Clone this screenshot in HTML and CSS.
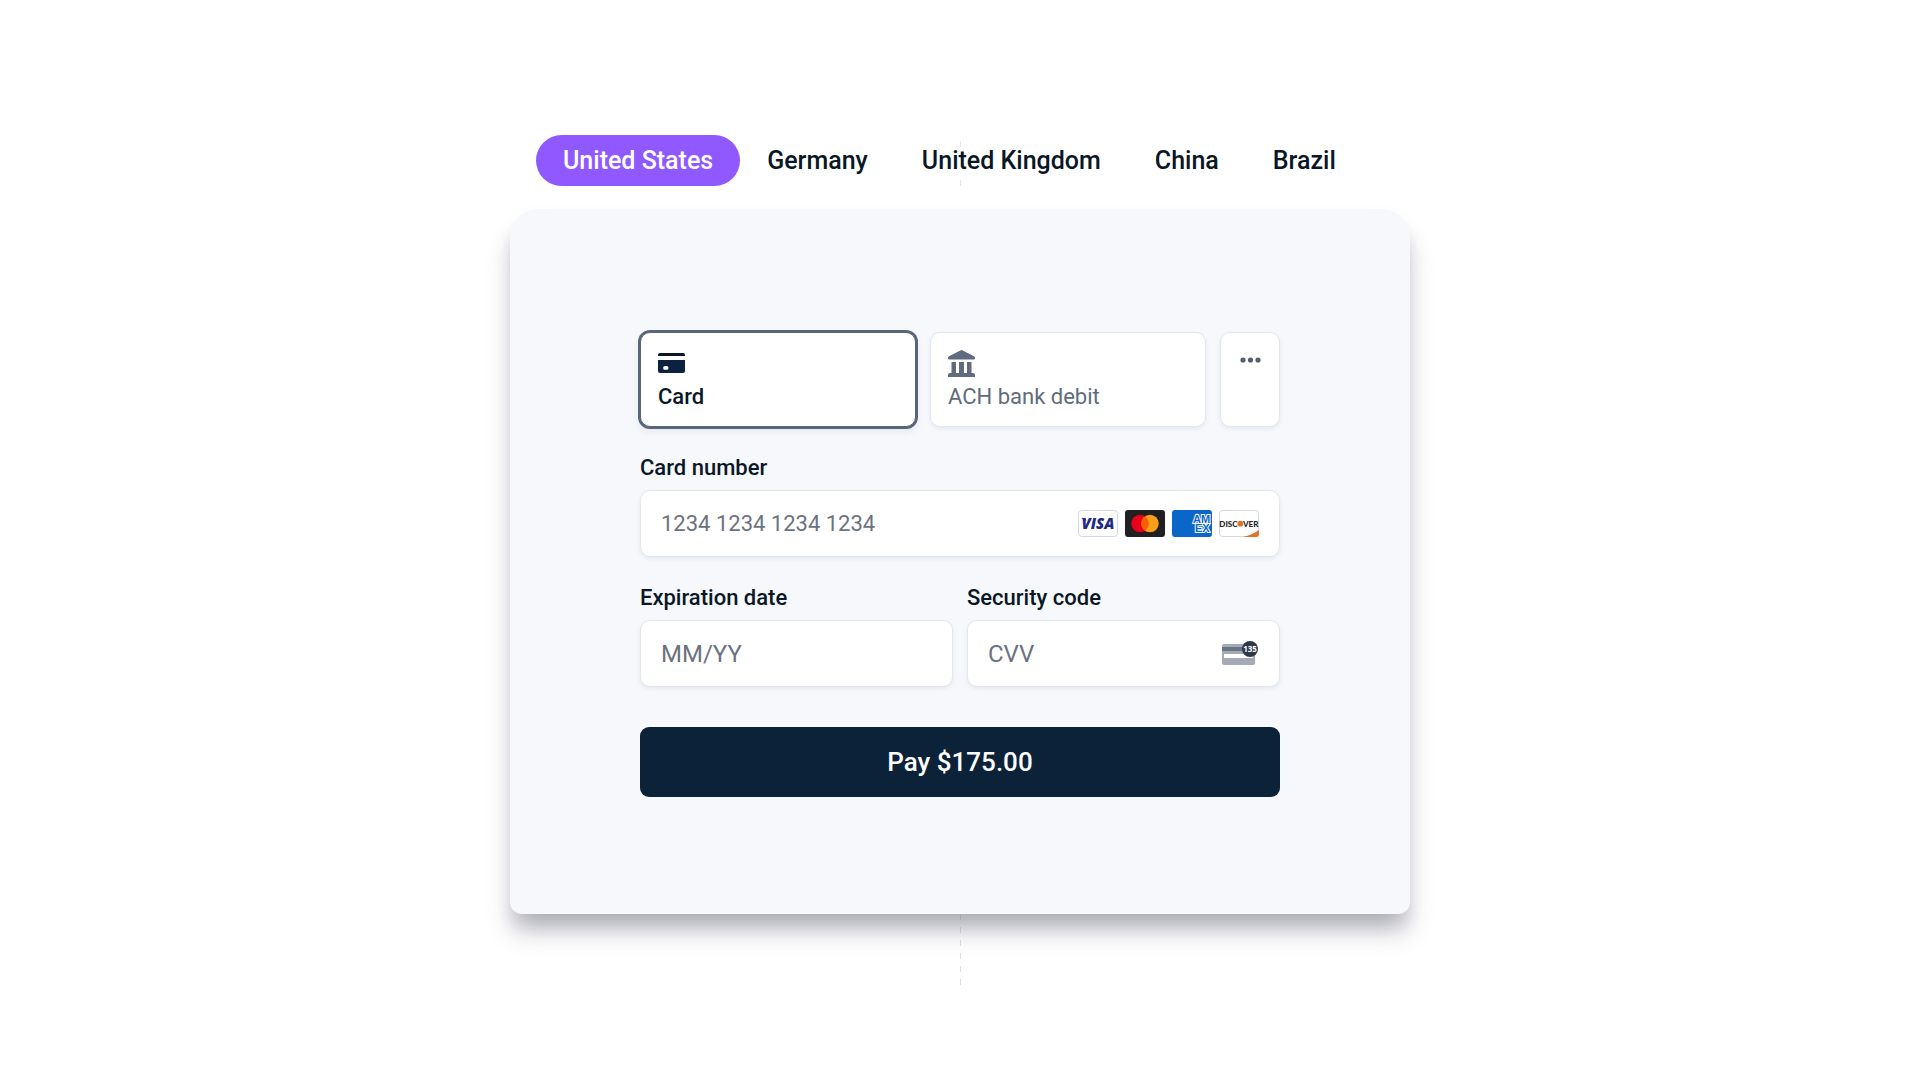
FILE: index.html
```html
<!DOCTYPE html>
<html lang="en">
<head>
  <meta charset="UTF-8">
  <meta name="viewport" content="width=device-width, initial-scale=1.0">
  <title>Payment Element</title>
  <link rel="stylesheet" href="styles.css">
</head>
<body>
  <main class="demo">
    <!-- Country switcher -->
    <nav class="countries">
      <button type="button" class="country active">United States</button>
      <button type="button" class="country">Germany</button>
      <button type="button" class="country">United Kingdom</button>
      <button type="button" class="country">China</button>
      <button type="button" class="country">Brazil</button>
    </nav>

    <div class="panel">
      <form class="checkout">
        <!-- Payment methods -->
        <div class="methods">
          <button type="button" class="method selected">
            <svg class="method-icon" viewBox="0 0 27 27" aria-hidden="true">
              <path d="M2 3h23a2 2 0 0 1 2 2v1H0V5a2 2 0 0 1 2-2z" fill="#0a1726"/>
              <path fill-rule="evenodd" d="M0 10h27v11a2 2 0 0 1-2 2H2a2 2 0 0 1-2-2zM7 16a1.900 1.900 0 0 0 0 3.800h1.600a1.900 1.900 0 0 0 0-3.800z" fill="#0a2240"/>
            </svg>
            <span>Card</span>
          </button>
          <button type="button" class="method">
            <svg class="method-icon" viewBox="0 0 27 27" fill="#616b80" aria-hidden="true">
              <path d="M12.300.400a2.500 2.500 0 0 1 2.400 0L26 6.200c.7.400 1 1 1 1.700 0 1-.7 1.600-1.500 1.600h-24C.7 9.500 0 8.900 0 7.900c0-.7.300-1.300 1-1.700z"/>
              <path d="M3.500 12h4.500v11h3V12h5v11h3V12h4.500v11h1.500a2 2 0 0 1 2 2v2H0v-2a2 2 0 0 1 2-2h1.500z"/>
            </svg>
            <span>ACH bank debit</span>
          </button>
          <button type="button" class="method more" aria-label="More payment methods">
            <svg class="dots" viewBox="0 0 21 6" fill="#555e70" aria-hidden="true">
              <circle cx="3" cy="3" r="2.600"/>
              <circle cx="10.500" cy="3" r="2.600"/>
              <circle cx="18" cy="3" r="2.600"/>
            </svg>
          </button>
        </div>

        <!-- Card number -->
        <div class="field">
          <label for="number">Card number</label>
          <div class="input-wrap">
            <input id="number" class="number" type="text" placeholder="1234 1234 1234 1234">
            <div class="brands">
              <svg class="brand" viewBox="0 0 40 27" role="img" aria-label="Visa">
                <rect x="0.500" y="0.500" width="39" height="26" rx="3" fill="#fff" stroke="#d5d8e2"/>
                <text x="20" y="19" text-anchor="middle" class="visa">VISA</text>
                <path d="M3 8.200h4.500l1 2.800z" fill="#1f2a86"/>
              </svg>
              <svg class="brand" viewBox="0 0 40 27" role="img" aria-label="Mastercard">
                <rect width="40" height="27" rx="3" fill="#221f20"/>
                <circle cx="15" cy="13.500" r="8.700" fill="#e9001b"/>
                <circle cx="25" cy="13.500" r="8.700" fill="#f99f1b"/>
                <path d="M20 6.400a8.700 8.700 0 0 1 0 14.200 8.700 8.700 0 0 1 0-14.200z" fill="#fc5f01"/>
              </svg>
              <svg class="brand" viewBox="0 0 40 27" role="img" aria-label="American Express">
                <rect width="40" height="27" rx="3" fill="#0a66c9"/>
                <text x="21" y="13" class="amex">AM</text>
                <text x="23" y="22" class="amex">EX</text>
              </svg>
              <svg class="brand" viewBox="0 0 40 27" role="img" aria-label="Discover">
                <rect x="0.500" y="0.500" width="39" height="26" rx="3" fill="#fff" stroke="#d5d8e2"/>
                <path d="M40 20v4a3 3 0 0 1-3 3H24q9-2 16-7z" fill="#e3702b"/>
                <text x="18.500" y="16.500" text-anchor="end" class="discover">DISC</text>
                <circle cx="21.300" cy="13.700" r="2.900" fill="#e3702b"/>
                <text x="24" y="16.500" class="discover">VER</text>
              </svg>
            </div>
          </div>
        </div>

        <!-- Expiration and security code -->
        <div class="row">
          <div class="field">
            <label for="expiry">Expiration date</label>
            <div class="input-wrap">
              <input id="expiry" type="text" placeholder="MM/YY">
            </div>
          </div>
          <div class="field">
            <label for="cvv">Security code</label>
            <div class="input-wrap">
              <input id="cvv" type="text" placeholder="CVV">
              <svg class="cvv-icon" viewBox="0 0 37 27" aria-hidden="true">
                <rect x="0" y="4" width="33" height="21" rx="2" fill="#a5abb5"/>
                <rect x="0" y="7" width="33" height="4" fill="#697386"/>
                <rect x="2" y="14" width="29" height="4" fill="#fff"/>
                <circle cx="28" cy="9" r="8" fill="#2d3848"/>
                <text x="28" y="12" text-anchor="middle" class="cvv-digits">135</text>
              </svg>
            </div>
          </div>
        </div>

        <button type="submit" class="pay">Pay $175.00</button>
      </form>
    </div>
  </main>
</body>
</html>
```
FILE: styles.css
```css
* {
  box-sizing: border-box;
}

body {
  margin: 0;
  background: #fff;
  color: #0a1726;
  font-family: Roboto, "Liberation Sans", sans-serif;
}

button,
input {
  font-family: inherit;
}

button {
  cursor: pointer;
}

.demo {
  max-width: 900px;
  margin: 0 auto;
  padding: 135px 0;
}

/* Country switcher */
.countries {
  position: relative;
  display: flex;
  padding: 0 26px;
  margin-bottom: 23px;
}

/* Dashed guide behind the switcher */
.countries::before {
  content: "";
  position: absolute;
  z-index: -1;
  top: 6px;
  left: 50%;
  width: 1px;
  height: 46px;
  background: repeating-linear-gradient(#e2e4ea 0 6px, transparent 6px 39px);
}

.country {
  height: 51px;
  padding: 0 27px;
  border: none;
  border-radius: 26px;
  background: none;
  color: #0a1726;
  font-size: 25px;
  font-weight: 500;
}

.country.active {
  background: #9059ff;
  color: #fff;
}

/* Panel */
.panel {
  position: relative;
  padding: 123px 130px 117px;
  border-radius: 28px 28px 12px 12px;
  background: #f6f8fc;
  box-shadow:
    0 20px 24px 6px rgba(60, 60, 90, 0.07),
    0 14px 14px rgba(50, 50, 80, 0.1),
    0 20px 24px -10px rgba(50, 50, 70, 0.3);
}

/* Dashed guide below the panel */
.panel::after {
  content: "";
  position: absolute;
  top: 100%;
  left: 50%;
  width: 1px;
  height: 74px;
  background: repeating-linear-gradient(rgba(120, 120, 140, 0.25) 0 6px, transparent 6px 13px);
}

/* Payment methods */
.methods {
  display: grid;
  grid-template-columns: 1fr 1fr 60px;
  gap: 14px;
}

.method {
  display: flex;
  flex-direction: column;
  align-items: flex-start;
  gap: 7px;
  padding: 17px 17px 16px;
  border: 1px solid #e3e6ed;
  border-radius: 10px;
  background: #fff;
  box-shadow: 0 2px 4px rgba(40, 60, 100, 0.08);
  color: #616b7c;
  font-size: 22px;
  line-height: 26px;
}

.method.selected {
  border-color: #596579;
  box-shadow: 0 0 0 2px #596579, 0 4px 8px rgba(40, 60, 100, 0.1);
  color: #0a1726;
  font-weight: 500;
}

.method-icon {
  width: 27px;
  height: 27px;
}

.method.more {
  align-items: center;
  padding: 24px 0;
}

.dots {
  width: 21px;
  height: 6px;
}

/* Fields */
.field {
  margin-top: 28px;
}

.field label {
  display: block;
  margin-bottom: 9px;
  font-size: 22px;
  font-weight: 500;
  line-height: 26px;
}

.row {
  display: grid;
  grid-template-columns: minmax(0, 1fr) minmax(0, 1fr);
  gap: 14px;
}

.input-wrap {
  display: flex;
  align-items: center;
  height: 67px;
  padding: 0 20px;
  border: 1px solid #e3e6ed;
  border-radius: 10px;
  background: #fff;
  box-shadow: 0 2px 4px rgba(40, 60, 100, 0.08);
}

.input-wrap input {
  flex: 1;
  min-width: 0;
  padding: 0;
  border: none;
  outline: none;
  background: none;
  color: #0a1726;
  font-size: 24px;
}

.input-wrap .number {
  font-size: 22px;
}

.input-wrap input::placeholder {
  color: #6b7280;
}

/* Card brands */
.brands {
  display: flex;
  gap: 7px;
}

.brand {
  width: 40px;
  height: 27px;
}

.visa {
  fill: #1f2a86;
  font: italic 800 15px "Open Sans", sans-serif;
}

.amex {
  fill: #0a66c9;
  stroke: #fff;
  stroke-width: 2px;
  paint-order: stroke;
  font: bold 11px "Liberation Sans", sans-serif;
}

.discover {
  fill: #24242a;
  font: 900 8px Lato, sans-serif;
}

.cvv-icon {
  width: 37px;
  height: 27px;
}

.cvv-digits {
  fill: #fff;
  font: bold 8px "Open Sans", sans-serif;
}

/* Pay button */
.pay {
  width: 100%;
  height: 70px;
  margin-top: 40px;
  border: none;
  border-radius: 9px;
  background: #0c2238;
  color: #fff;
  font-size: 26px;
  font-weight: 500;
}
```
